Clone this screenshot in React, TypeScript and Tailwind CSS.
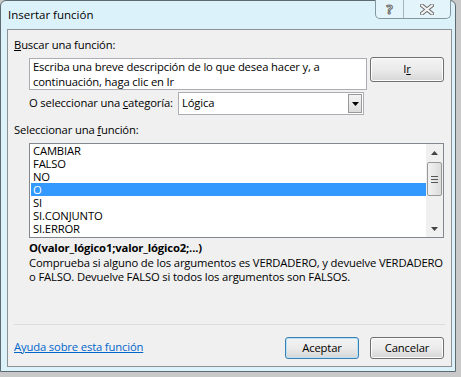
import React from "react";

const font = { fontFamily: '"Open Sans", "Noto Sans", sans-serif' };

const functions = ["CAMBIAR", "FALSO", "NO", "O", "SI", "SI.CONJUNTO", "SI.ERROR"];

const Win7Button = ({ children, primary }: { children: React.ReactNode; primary?: boolean }) => (
  <button
    className={
      "w-[74px] h-[22px] rounded-[3px] border text-[11.25px] leading-none text-black bg-gradient-to-b from-[#f3f3f3] via-[#ebebeb] to-[#d6d6d6] " +
      (primary ? "border-[#3c7fb1] shadow-[inset_0_0_0_1px_#b8e2f7]" : "border-[#707070] shadow-[inset_0_0_0_1px_#fcfcfc]")
    }
  >
    {children}
  </button>
);

const Arrow = ({ down }: { down?: boolean }) => (
  <svg width="7" height="4" viewBox="0 0 7 4">
    <polygon points={down ? "0,0 7,0 3.5,4" : "0,4 7,4 3.5,0"} fill="#444" />
  </svg>
);

export default function App() {
  return (
    <div className="w-[461px] h-[377px] bg-[#c9c9c9] overflow-hidden" style={font}>
      <div className="w-[456px] h-[372px] border border-[#5f6a70] rounded-t-[6px] bg-[#dcf2fa] flex flex-col pl-[6px] pr-[3px] pb-[4px]">
        {/* title bar */}
        <div className="h-[28px] flex items-start justify-between">
          <span className="text-[11.5px] leading-[28px] pl-[1px] text-black">Insertar función</span>
          <div className="flex h-[19px] mr-[1px] -mt-px border border-t-0 border-[#8496a2] rounded-b-[5px] bg-[#e4f4fb] overflow-hidden">
            <div className="w-[28px] flex items-center justify-center border-r border-[#a3b4be]">
              <span className="text-[13px] font-bold text-[#f8f8f8] [-webkit-text-stroke:1px_#6b6b6b] leading-none">?</span>
            </div>
            <div className="w-[46px] flex items-center justify-center">
              <svg width="14" height="11" viewBox="0 0 14 11">
                <path d="M2 1.5 L12 9.5 M12 1.5 L2 9.5" stroke="#6b6b6b" strokeWidth="4" strokeLinecap="square" />
                <path d="M2 1.5 L12 9.5 M12 1.5 L2 9.5" stroke="#f4f4f4" strokeWidth="2" strokeLinecap="square" />
              </svg>
            </div>
          </div>
        </div>

        {/* client panel */}
        <div className="flex-1 border border-[#8d9194] bg-[#f0f0f0] flex flex-col pl-[6px] pr-[7px] pb-[7px] text-[11.25px] tracking-[-0.15px] text-black">
          <div className="mt-[7px] h-[15px] leading-[15px]">
            <span className="underline">B</span>uscar una función:
          </div>

          <div className="mt-[5px] flex items-start pl-[15px]">
            <div className="mt-px w-[338px] h-[32px] border border-[#abadb3] bg-white pl-[3px] leading-[15px]">
              Escriba una breve descripción de lo que desea hacer y, a continuación, haga clic en Ir
            </div>
            <button className="ml-auto w-[74px] h-[25px] rounded-[3px] border border-[#707070] shadow-[inset_0_0_0_1px_#fcfcfc] bg-gradient-to-b from-[#f3f3f3] via-[#ebebeb] to-[#d6d6d6]">
              I<span className="underline">r</span>
            </button>
          </div>

          <div className="mt-[2px] flex items-center pl-[15px] h-[23px]">
            <span className="w-[149px] whitespace-nowrap">
              O seleccionar una <span className="underline">c</span>ategoría:
            </span>
            <div className="w-[186px] h-[23px] border border-[#abadb3] bg-white flex items-center justify-between">
              <span className="pl-[3px]">Lógica</span>
              <div className="w-[14px] h-[19px] mr-px border border-[#999] bg-gradient-to-b from-[#f4f4f4] to-[#dcdcdc] flex items-center justify-center">
                <svg width="7" height="4" viewBox="0 0 7 4">
                  <polygon points="0,0 7,0 3.5,4" fill="#000" />
                </svg>
              </div>
            </div>
          </div>

          <div className="mt-[7px] h-[15px] leading-[15px]">
            Seleccionar una <span className="underline">f</span>unción:
          </div>

          <div className="mt-[6px] ml-[15px] h-[95px] border border-[#828790] bg-white flex overflow-hidden">
            <div className="flex-1 pl-px">
              {functions.map((f) => (
                <div
                  key={f}
                  className={"h-[13px] leading-[13px] pl-[2px] " + (f === "O" ? "bg-[#3399ff] text-white" : "text-black")}
                >
                  {f}
                </div>
              ))}
            </div>
            <div className="w-[17px] bg-[#f0f0f0] flex flex-col items-center">
              <div className="h-[17px] flex items-center justify-center">
                <Arrow />
              </div>
              <div className="w-[15px] h-[34px] mt-px rounded-[2px] border border-[#979797] bg-gradient-to-r from-[#f2f2f2] to-[#dcdcdc] flex flex-col items-center justify-center gap-[2px]">
                <div className="w-[7px] h-px bg-[#555]" />
                <div className="w-[7px] h-px bg-[#555]" />
                <div className="w-[7px] h-px bg-[#555]" />
              </div>
              <div className="flex-1" />
              <div className="h-[17px] flex items-center justify-center">
                <Arrow down />
              </div>
            </div>
          </div>

          <div className="mt-[2px] pl-[15px] h-[15px] leading-[15px] font-bold">O(valor_lógico1;valor_lógico2;...)</div>
          <div className="mt-px pl-[15px] mr-[-8px] leading-[14px]">
            Comprueba si alguno de los argumentos es VERDADERO, y devuelve VERDADERO o FALSO. Devuelve FALSO si todos los argumentos son FALSOS.
          </div>

          <div className="mt-auto h-px bg-[#dcdcdc] mr-[-1px]" />

          <div className="mt-[12px] flex items-center">
            <a className="text-[#0066cc] underline mt-[-2px]">Ayuda sobre esta función</a>
            <div className="ml-auto flex gap-[11px]">
              <Win7Button primary>Aceptar</Win7Button>
              <Win7Button>Cancelar</Win7Button>
            </div>
          </div>
        </div>
      </div>
    </div>
  );
}
